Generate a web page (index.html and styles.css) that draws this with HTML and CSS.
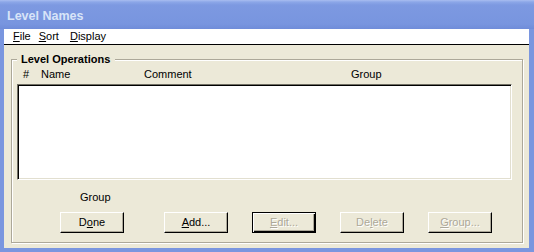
FILE: index.html
```html
<!DOCTYPE html>
<html lang="en">
<head>
    <meta charset="UTF-8">
    <meta name="viewport" content="width=device-width, initial-scale=1.0">
    <title>Level Names</title>
    <link rel="stylesheet" href="styles.css">
</head>
<body>
    <div class="window">
        <div class="titlebar">Level Names</div>
        <div class="client">
            <div class="menubar">
                <span class="menu-item"><u>F</u>ile</span>
                <span class="menu-item"><u>S</u>ort</span>
                <span class="menu-item"><u>D</u>isplay</span>
            </div>
            <div class="dialog">
                <fieldset class="group-box">
                    <legend>Level Operations</legend>
                    <div class="list-header">
                        <span>#</span>
                        <span>Name</span>
                        <span>Comment</span>
                        <span>Group</span>
                    </div>
                    <div class="listbox"></div>
                    <div class="group-label">Group</div>
                    <div class="btn-row">
                        <button class="btn btn-done">D<u>o</u>ne</button>
                        <button class="btn btn-add"><u>A</u>dd...</button>
                        <button class="btn btn-default" disabled><u>E</u>dit...</button>
                        <button class="btn" disabled>De<u>l</u>ete</button>
                        <button class="btn" disabled><u>G</u>roup...</button>
                    </div>
                </fieldset>
            </div>
        </div>
    </div>
</body>
</html>
```

FILE: styles.css
```css
body {
    margin: 0;
    font-family: "Liberation Sans", Arial, sans-serif;
    font-size: 11px;
    color: #000;
    background-color: #7a96df;
}

.window {
    width: 534px;
    height: 252px;
    display: flex;
    flex-direction: column;
    background-color: #7a96df;
    box-sizing: border-box;
}

.titlebar {
    height: 29px;
    flex: none;
    box-sizing: border-box;
    padding: 9px 0 0 7px;
    font-size: 12.5px;
    font-weight: bold;
    line-height: 15px;
    color: #d8e4f8;
    background:
        linear-gradient(to bottom, #a9bdf0 0, #8ca7e8 2px, #7d99e1 5px, #7895df 24px, #6f8cd9 29px),
        #7a96df;
}

.client {
    flex: 1;
    display: flex;
    flex-direction: column;
    margin: 0 5px 4px 4px;
}

.menubar {
    height: 15px;
    background-color: #fff;
    border-bottom: 1px solid #000;
    display: flex;
    padding-left: 9px;
    line-height: 14px;
}

.menu-item {
    margin-right: 8px;
}

.menu-item:nth-child(2) {
    margin-right: 11px;
}

.dialog {
    flex: 1;
    background-color: #ece9d8;
    padding: 8px 6px 5px 7px;
    display: flex;
}

.group-box {
    flex: 1;
    margin: 0;
    padding: 0 10px 0 5px;
    border: 1px solid #aca899;
    box-shadow: 1px 1px 0 #fff, inset 1px 1px 0 #fff;
    min-width: 0;
}

.group-box legend {
    font-weight: bold;
    line-height: 13px;
    padding: 0 5px 0 4px;
    background-color: #ece9d8;
}

.list-header {
    display: grid;
    grid-template-columns: 18px 103px 207px 1fr;
    height: 18px;
    box-sizing: border-box;
    padding: 2px 0 0 6px;
    line-height: 13px;
}

.listbox {
    height: 96px;
    box-sizing: border-box;
    background-color: #fff;
    border-top: 1px solid #716f64;
    border-left: 1px solid #716f64;
    border-right: 1px solid #fff;
    border-bottom: 1px solid #fff;
    box-shadow: inset 1px 1px 0 #000, inset -1px -1px 0 #e2dfd0;
}

.group-label {
    margin: 11px 0 0 63px;
    line-height: 13px;
}

.btn-row {
    display: flex;
    margin-top: 8px;
}

.btn {
    width: 64px;
    height: 21px;
    margin: 0 0 0 24px;
    padding: 0;
    font-family: inherit;
    font-size: 11px;
    line-height: 17px;
    color: #000;
    background-color: #ece9d8;
    border: 1px solid;
    border-color: #fff #000 #000 #fff;
    box-shadow: inset -1px -1px 0 #aca899;
}

.btn-done {
    margin-left: 43px;
}

.btn-add {
    margin-left: 40px;
}

.btn:disabled {
    color: #aca899;
    text-shadow: 1px 1px 0 #fff;
}

.btn-default {
    border-color: #000;
    box-shadow: inset 1px 1px 0 #fff, inset -1px -1px 0 #000, inset -2px -2px 0 #aca899;
}
```
